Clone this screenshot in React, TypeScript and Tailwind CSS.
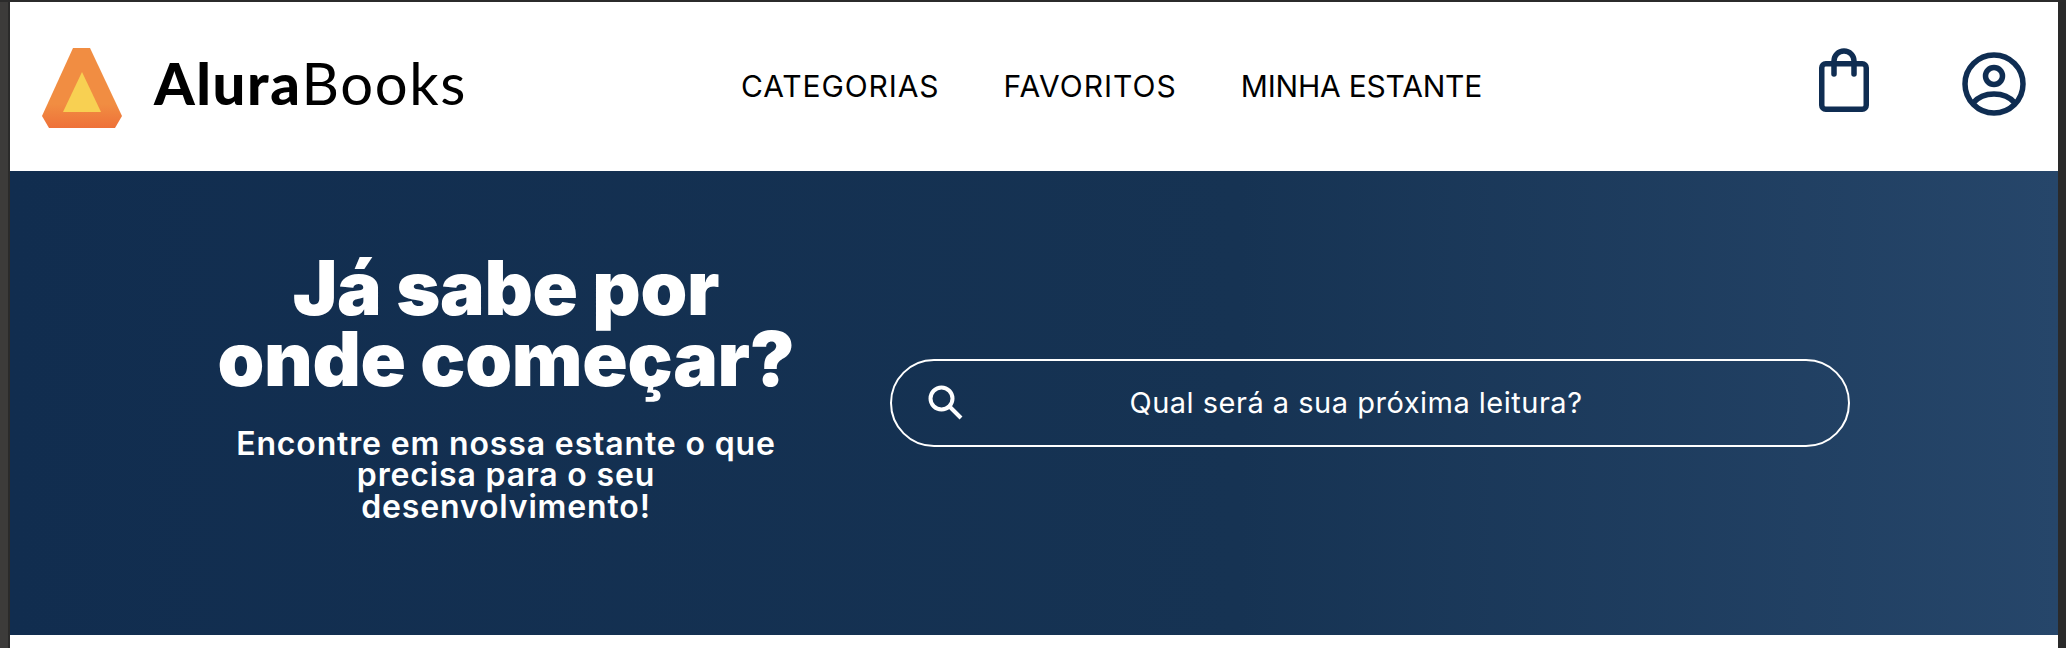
export default function App() {
  return (
    <div className="flex h-[648px] w-full flex-col overflow-hidden bg-[#2b2b2b] pt-[2px] font-['Inter',sans-serif]">
      <div className="flex min-h-0 flex-1">
        {/* window edge on the left */}
        <div className="w-[8px] bg-[#3c3b3a]" />
        <div className="w-[2px] bg-[#2a2a2a]" />

        <div className="flex min-w-0 flex-1 flex-col bg-white">
          <header className="flex h-[169px] items-center bg-white pr-[32px] pl-[32px]">
            <a href="#" className="flex items-center">
              <svg width="80" height="80" viewBox="0 0 80 80" className="mb-[-2px]">
                <defs>
                  <linearGradient id="logoFill" x1="0" y1="0" x2="0" y2="1">
                    <stop offset="0.7" stopColor="#f18d42" />
                    <stop offset="1" stopColor="#ee7139" />
                  </linearGradient>
                </defs>
                <polygon points="31,0 48,0 80,68 73,80 7,80 0,68" fill="url(#logoFill)" />
                <polygon points="40,24 59,64 21,64" fill="#f8d052" />
              </svg>
              <span className="mb-[8px] ml-[32px] text-[58px] leading-none tracking-[1.6px] text-black font-['Lato',sans-serif]">
                <span className="font-black">Alura</span>
                <span className="font-normal">Books</span>
              </span>
            </a>

            <nav className="ml-[274px] flex items-center gap-[64px] text-[30px] font-normal text-black">
              <a href="#" className="tracking-[0.9px]">CATEGORIAS</a>
              <a href="#" className="tracking-[1px]">FAVORITOS</a>
              <a href="#" className="tracking-[-0.2px]">MINHA ESTANTE</a>
            </nav>

            <div className="ml-auto flex items-center gap-[93px]">
              <a href="#" aria-label="Sacola" className="mb-[14px]">
                <svg width="50" height="64" viewBox="0 0 50 64" fill="none" stroke="#0f2d52" strokeWidth="5.5" strokeLinecap="round" strokeLinejoin="round" className="block">
                  <rect x="2.75" y="15.75" width="44.5" height="45.5" rx="4" />
                  <path d="M15 26V13a10 10 0 0 1 20 0V26" />
                </svg>
              </a>
              <a href="#" aria-label="Perfil" className="mb-[6px]">
                <svg width="64" height="64" viewBox="0 0 64 64" fill="none" stroke="#0f2d52" strokeWidth="5.5" className="block">
                  <circle cx="32" cy="32" r="29" />
                  <circle cx="32" cy="24" r="8.5" />
                  <path d="M11 51C17 44 25 42 32 42s15 2 21 9" />
                </svg>
              </a>
            </div>
          </header>

          <section className="flex h-[464px] items-center bg-gradient-to-r from-[#112d4f] via-[#163353] via-60% to-[#26466a] text-white">
            <div className="mb-[32px] ml-[196px] w-[600px] text-center">
              <h1 className="text-[75px] leading-[71px] font-black tracking-[-0.3px]">
                Já sabe por
                <br />
                onde começar?
              </h1>
              <p className="mx-auto mt-[34px] w-[548px] text-[32px] leading-[31.5px] font-semibold tracking-[0.85px]">
                Encontre em nossa estante o que precisa para o seu desenvolvimento!
              </p>
            </div>

            <div className="ml-[84px] flex h-[88px] w-[960px] items-center rounded-[44px] border-2 border-white pr-[100px] pl-[36px]">
              <svg width="36" height="36" viewBox="0 0 36 36" fill="none" stroke="#fff" strokeWidth="4" className="shrink-0">
                <circle cx="13.5" cy="13.5" r="11" />
                <path d="M21.5 21.5L33 33" />
              </svg>
              <span className="flex-1 text-center text-[29px] tracking-[0.5px]">Qual será a sua próxima leitura?</span>
            </div>
          </section>

          <div className="flex-1 bg-white" />
        </div>

        {/* window edge on the right */}
        <div className="w-[8px] bg-[#2a2a2a]" />
      </div>
    </div>
  );
}
